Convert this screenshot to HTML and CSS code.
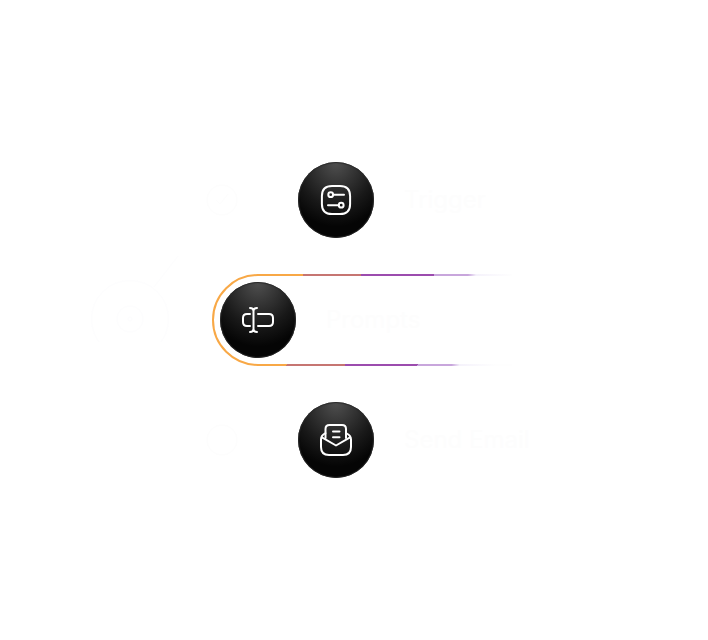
FILE: index.html
```
<!DOCTYPE html>
<html lang="en">
<head>
<meta charset="utf-8">
<title>Workflow</title>
<link rel="stylesheet" href="styles.css">
</head>
<body>
<main class="flow">
  <svg class="hub" viewBox="0 0 92 88" fill="none">
    <circle cx="41" cy="65" r="38.5"/>
    <path d="M65 33 89 2"/><circle cx="41" cy="65" r="13"/><circle cx="41" cy="65" r="2"/>
  </svg>
  <div class="steps">
    <div class="step">
      <svg class="state" viewBox="0 0 32 32" fill="none"><circle cx="16" cy="16" r="15"/><path d="m10 16 4 4 8-10"/></svg>
      <div class="disc">
        <svg viewBox="0 0 40 40" fill="none">
          <path d="M20 5.9H24Q34.1 5.9 34.1 16V24Q34.1 34.1 24 34.1H16Q5.9 34.1 5.9 24V16Q5.9 5.9 16 5.9Z"/>
          <circle cx="14.7" cy="14.7" r="2.4"/><path d="M17.2 14.7H28"/>
          <circle cx="25.2" cy="25.2" r="2.4"/><path d="M12 25.2H22.7"/>
        </svg>
      </div>
      <span class="label">Trigger</span>
    </div>
    <div class="step active">
      <svg class="outline" viewBox="0 0 300 92" fill="none">
        <defs>
          <linearGradient id="trail" gradientUnits="userSpaceOnUse" x1="0" y1="1" x2="290.3" y2="54.1">
            <stop offset=".303" stop-color="#f8a846"/><stop offset=".303" stop-color="#c67572"/>
            <stop offset=".498" stop-color="#c67572"/><stop offset=".498" stop-color="#9c4cae"/>
            <stop offset=".74" stop-color="#9c4cae"/><stop offset=".74" stop-color="#c8a6dc"/>
            <stop offset=".853" stop-color="#c8a6dc"/><stop offset=".88" stop-color="#f5f2fb"/>
            <stop offset="1" stop-color="#fefefe"/>
          </linearGradient>
        </defs>
        <path d="M300 1H46a45 45 0 0 0 0 90H300" stroke="url(#trail)" stroke-width="2"/>
      </svg>
      <div class="disc">
        <svg viewBox="0 0 40 40" fill="none">
          <path d="M12 8q3.5 0 3.5 3v18q0 3-3.5 3M19 8q-3.5 0-3.5 3v18q0 3 3.5 3"/>
          <path d="M12 14H9q-4 0-4 4v4q0 4 4 4h3M20 14H31q4 0 4 4v4q0 4-4 4H20"/>
        </svg>
      </div>
      <span class="label">Prompts</span>
    </div>
    <div class="step">
      <svg class="state" viewBox="0 0 32 32" fill="none"><circle cx="16" cy="16" r="15"/></svg>
      <div class="disc">
        <svg viewBox="0 0 40 40" fill="none">
          <path d="M9.5 18V9q0-4 4-4H26q4 0 4 4V18M17 11.5H23.5M17 17.2H23.5"/>
          <path d="M9.5 13.2Q5 15.4 5 19.5V27Q5 35 13 35H27Q35 35 35 27V19.5Q35 15.4 30 13.2M5.5 17.2 20 25.5 34.5 17.2"/>
        </svg>
      </div>
      <span class="label">Send Email</span>
    </div>
  </div>
</main>
</body>
</html>
```
FILE: styles.css
```
* { box-sizing: border-box; }
body {
  margin: 0;
  background: #fff;
  font-family: Inter, "Liberation Sans", sans-serif;
}
.flow {
  display: flex;
  height: 640px;
  padding: 154px 0 0 89px;
}
.hub {
  width: 92px;
  height: 88px;
  margin-top: 100px;
  stroke: #fdfdfe;
}
.steps {
  display: flex;
  flex-direction: column;
  gap: 28px;
  margin-left: 25px;
}
.step {
  display: flex;
  align-items: center;
  height: 92px;
}
.state {
  width: 32px;
  height: 32px;
  margin-right: 60px;
  margin-left: 0;
  stroke: #fdfdfd;
}
.disc {
  display: grid;
  place-items: center;
  width: 76px;
  height: 76px;
  border-radius: 50%;
  background: radial-gradient(ellipse 75% 85% at 50% 0, #505050 0, #363636 32%, #191919 68%, #050505 100%);
  box-shadow: inset 0 0 1px 1px #292929;
}
.disc svg {
  width: 40px;
  height: 40px;
  stroke: #fff;
  stroke-width: 2;
  stroke-linecap: round;
  stroke-linejoin: round;
}
.label {
  margin-left: 30px;
  font-size: 24px;
  line-height: 32px;
  color: #fdfdfd;
}
.active {
  position: relative;
  width: 300px;
  margin-left: 6px;
  padding-left: 8px;
}
.outline {
  position: absolute;
  inset: 0;
  width: 300px;
  height: 92px;
}
```
